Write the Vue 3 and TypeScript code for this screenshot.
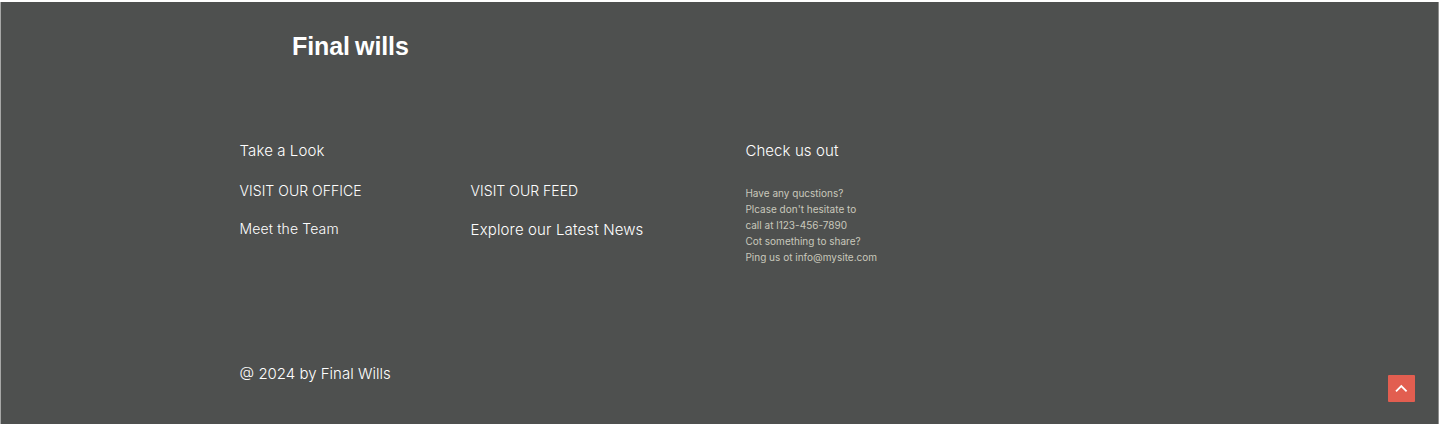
<script setup lang="ts">
const contactLines: string[] = [
  'Have any qucstions?',
  "Plcase don't hesitate to",
  'call at l123-456-7890',
  'Cot something to share?',
  'Ping us ot info@mysite.com',
]
const scrollTop = (): void => window.scrollTo({ top: 0, behavior: 'smooth' })
</script>

<template>
  <footer class="footer">
    <h1 class="brand">Final wills</h1>
    <div class="columns">
      <section class="look">
        <h2 class="heading">Take a Look</h2>
        <div class="links">
          <div class="group">
            <span class="label">VISIT OUR OFFICE</span>
            <a class="team">Meet the Team</a>
          </div>
          <div class="group">
            <span class="label">VISIT OUR FEED</span>
            <a class="news">Explore our Latest News</a>
          </div>
        </div>
      </section>
      <section class="contact">
        <h2 class="heading">Check us out</h2>
        <p class="details">
          <span v-for="line in contactLines" :key="line">{{ line }}</span>
        </p>
      </section>
    </div>
    <div class="bottom">
      <span class="copyright">@ 2024 by Final Wills</span>
      <button class="to-top" type="button" aria-label="Back to top" @click="scrollTop">
        <svg width="27" height="27" viewBox="0 0 27 27" fill="none">
          <path d="M8 16.3L13.3 11L18.6 16.3" stroke="#fff" stroke-width="1.8" />
        </svg>
      </button>
    </div>
  </footer>
</template>

<style>
body { background: #fff; }
</style>

<style scoped>
.footer {
  box-sizing: border-box;
  width: 1439px;
  height: 422px;
  margin: 2px 0 0;
  padding: 28px 23px 0 238.6px;
  border-left: 1px solid #a7a8a7;
  border-right: 1px solid #8f908f;
  background: #4e504f;
  color: #fff;
  font-family: Inter, sans-serif;
  font-weight: 300;
}
.brand {
  margin: 0 0 0 52.4px;
  font: 700 25px/32px 'Liberation Sans', sans-serif;
  letter-spacing: -0.1px;
  word-spacing: -1.6px;
}
.columns { display: flex; margin-top: 77px; }
.look { width: 505.8px; }
.heading { margin: 0; font-size: 15px; line-height: 24px; font-weight: 300; letter-spacing: 0.09px; }
.links { display: grid; grid-template-columns: 231px auto; margin-top: 18px; }
.group { display: flex; flex-direction: column; gap: 18px; }
.label { font-size: 14px; line-height: 20px; letter-spacing: 0.03px; }
.team { font-size: 14px; line-height: 20px; letter-spacing: 0.14px; }
.news { padding-top: 1px; font-size: 15px; line-height: 20px; letter-spacing: 0.14px; }
.details { display: flex; flex-direction: column; margin: 22px 0 0; color: #c9c8bc; font-size: 10px; line-height: 16px; font-weight: 400; letter-spacing: 0.01px; }
.bottom { display: flex; justify-content: space-between; align-items: flex-start; margin-top: 97px; }
.copyright { font-size: 15px; line-height: 24px; }
.to-top { width: 27px; height: 27px; margin-top: 13px; padding: 0; border: 0; border-radius: 1px; background: #e25e50; }
.to-top svg { display: block; }
</style>
